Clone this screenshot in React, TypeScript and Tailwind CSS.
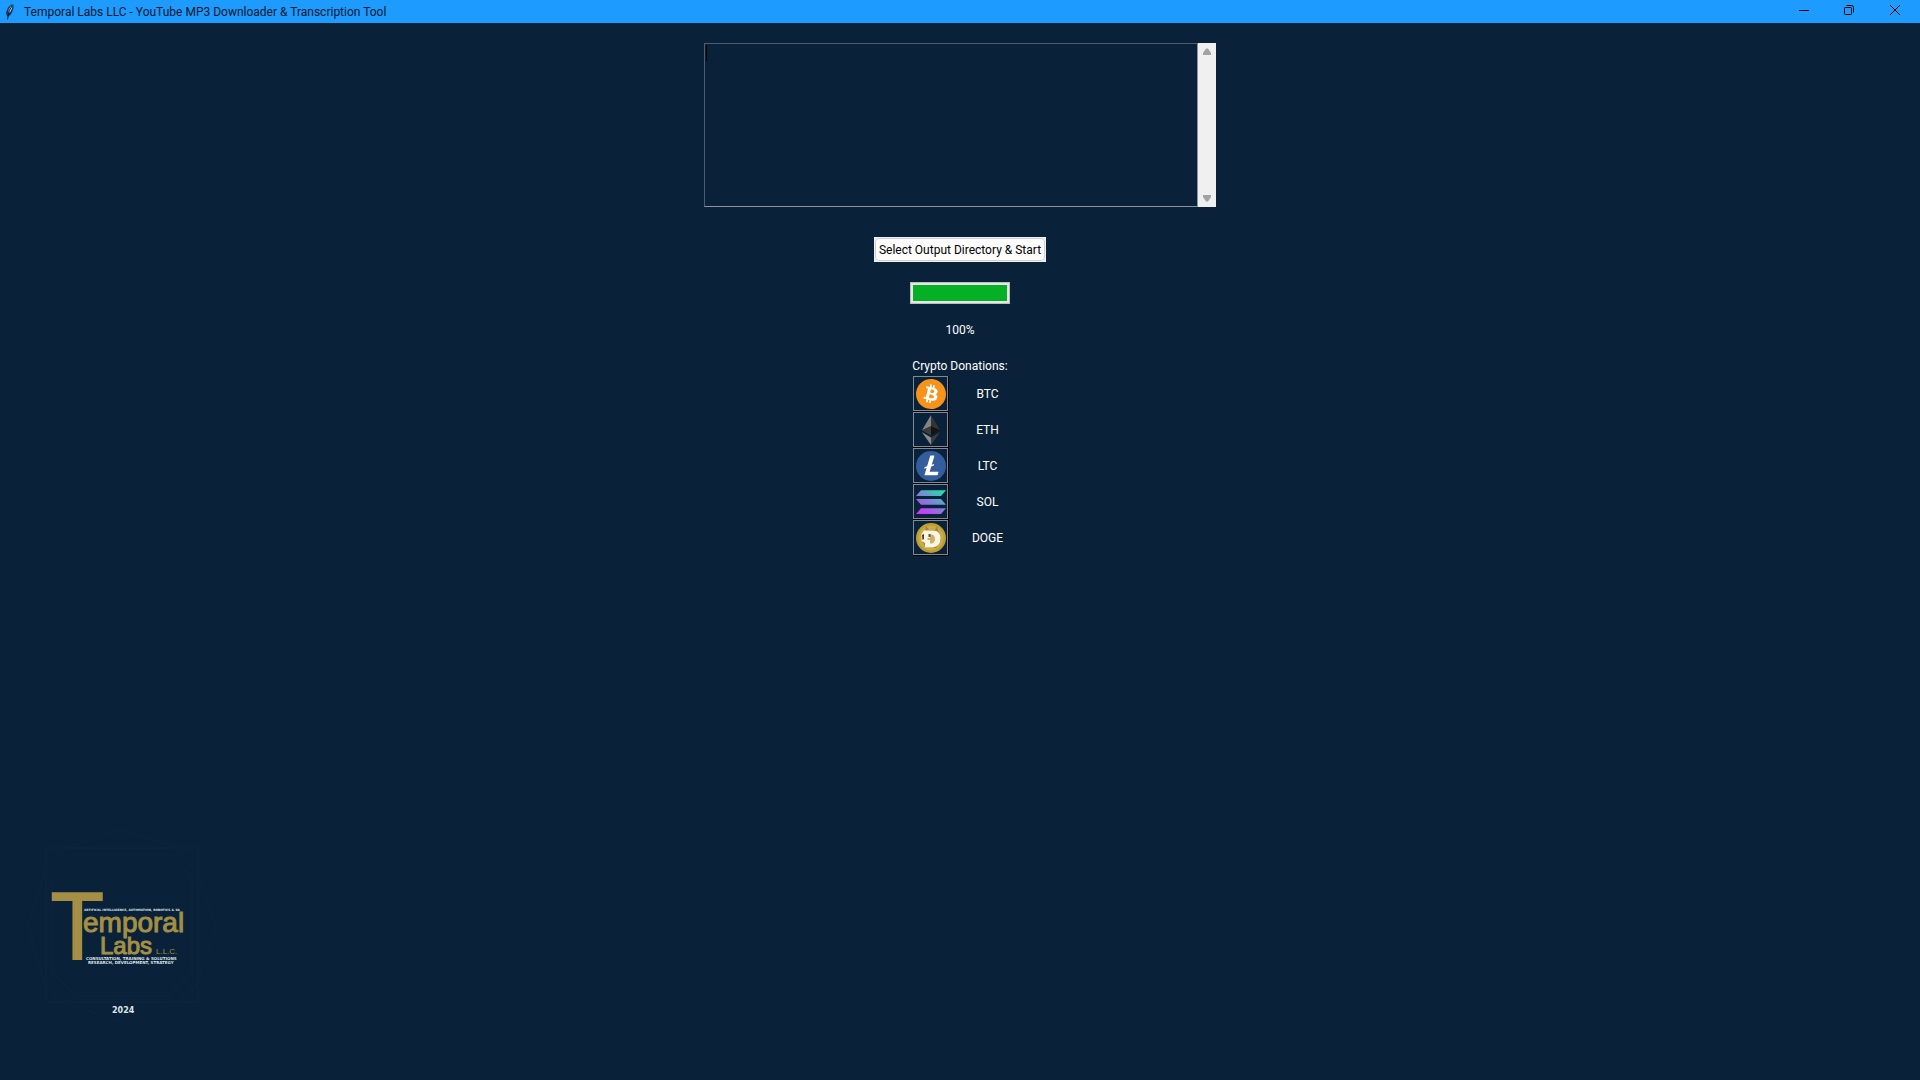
import type { ReactNode } from "react";
import { SiBitcoin, SiLitecoin } from "react-icons/si";

function Feather() {
  return (
    <svg viewBox="0 0 10 16" className="h-4 w-2.5 shrink-0" aria-hidden="true">
      <path d="M2 12.5 1 8.500 3 3.500 6 .8 8.500 .5 8.500 4 7 8.500 5 11.500 3 12.500Z" fill="#12375f" />
      <path d="M3 10 3.500 6 5.500 2.500 7.500 1.500 7 4.500 5.500 7.500Z" fill="#a9d0f5" />
      <path d="M7 2 4 7 2.500 15.500" fill="none" stroke="#08182b" strokeWidth="1" />
    </svg>
  );
}

function TitleBar() {
  return (
    <header className="flex h-[23px] items-center bg-[#1e9bff] pl-[5px] text-[#04182c]">
      <Feather />
      <h1 className="ml-[9px] text-[12px] leading-4">
        Temporal Labs LLC - YouTube MP3 Downloader &amp; Transcription Tool
      </h1>
      <div className="ml-auto flex items-center pr-0.5 pb-[3px]">
        <button aria-label="Minimize" className="flex h-5 w-11 items-center justify-center">
          <svg viewBox="0 0 10 10" className="size-2.5" shapeRendering="crispEdges">
            <path d="M0 5.500H10" stroke="#000" />
          </svg>
        </button>
        <button aria-label="Restore" className="flex h-5 w-[46px] items-center justify-center">
          <svg viewBox="0 0 10 10" className="size-2.5" fill="none" stroke="#000">
            <rect x="0.5" y="2.5" width="7" height="7" rx="0.8" />
            <path d="M2.500 .5H7.500A2 2 0 0 1 9.500 2.500V7.500" />
          </svg>
        </button>
        <button aria-label="Close" className="flex h-5 w-[46px] items-center justify-center">
          <svg viewBox="0 0 10 10" className="size-2.5" stroke="#000">
            <path d="M0 0 10 10M10 0 0 10" />
          </svg>
        </button>
      </div>
    </header>
  );
}

function UrlBox() {
  return (
    <div className="flex h-[164px] w-[512px]">
      <div className="relative flex-1">
        <textarea
          aria-label="YouTube URLs"
          className="block size-full resize-none border border-[#4c5e6e] border-r-[#8a949d] border-b-[#8a949d] bg-[#0a2239] p-0.5 font-['Liberation_Mono',monospace] text-[13px] text-white outline-none"
        />
        <span className="absolute top-0.5 left-0.5 h-4 w-px bg-black" />
      </div>
      <div className="flex w-[18px] flex-col items-center justify-between bg-[#f0f0f0] py-[5px]">
        <button aria-label="Scroll up" className="block">
          <svg viewBox="0 0 8 7" className="h-[7px] w-2" fill="#a3a3a3">
            <path d="M0 7V5L3 .5H5L8 5V7Z" />
          </svg>
        </button>
        <button aria-label="Scroll down" className="block">
          <svg viewBox="0 0 8 7" className="h-[7px] w-2" fill="#a3a3a3">
            <path d="M0 0V2L3 6.500H5L8 2V0Z" />
          </svg>
        </button>
      </div>
    </div>
  );
}

function Btc() {
  return (
    <svg viewBox="0 0 30 30" className="size-[30px]">
      <circle cx="15" cy="15" r="13" fill="#fff" />
      <SiBitcoin size={30} color="#f7931a" />
    </svg>
  );
}

function Eth() {
  return (
    <svg viewBox="0 0 30 30" className="size-[30px]">
      <path d="M15 0 6 15.300 15 11.200Z" fill="#828384" />
      <path d="M15 0 24 15.300 15 11.200Z" fill="#343434" />
      <path d="M6 15.300 15 11.200V20.600Z" fill="#3c3c3b" />
      <path d="M24 15.300 15 11.200V20.600Z" fill="#141414" />
      <path d="M6 17.200 15 22.500V30Z" fill="#8c8c8c" />
      <path d="M24 17.200 15 22.500V30Z" fill="#3c3c3b" />
    </svg>
  );
}

function Ltc() {
  return (
    <svg viewBox="0 0 30 30" className="size-[30px]">
      <circle cx="15" cy="15" r="14" fill="#fff" />
      <SiLitecoin size={30} color="#345d9d" />
    </svg>
  );
}

function Sol() {
  return (
    <svg viewBox="0 0 30 30" className="size-[30px]">
      <defs>
        <linearGradient id="sol" gradientUnits="userSpaceOnUse" x1="27" y1="1" x2="9" y2="31">
          <stop offset="0" stopColor="#14f1a5" />
          <stop offset="0.5" stopColor="#7a86d6" />
          <stop offset="1" stopColor="#d92bff" />
        </linearGradient>
      </defs>
      <g fill="url(#sol)">
        <path d="M0 9 5 3.300H30L25 9Z" />
        <path d="M0 12H25L30 17.800H5Z" />
        <path d="M0 27 5 21.200H30L25 27Z" />
      </g>
    </svg>
  );
}

function Doge() {
  return (
    <svg viewBox="0 0 30 30" className="size-[30px]">
      <circle cx="15" cy="15" r="15" fill="#ba9f33" />
      <circle cx="15" cy="15" r="12.5" fill="#c9ab48" />
      <path d="M9 9 10 3 13 7 19 7 21 3 23 10 25 17 20 25H10L6 18Z" fill="#ad8233" />
      <path d="M8 7.500H17C22 7.500 24.500 11 24.500 15.500 24.500 21 21 24.500 16 24.500H9V20L5.500 18V11Z" fill="#fbf6e4" />
      <path d="M6 12 8 11V16L6.500 17Z" fill="#4d3b1c" />
      <path d="M14 11.500H16C20 12 20 20 16 20.500H14V17H11.500V15H14Z" fill="#cdb16a" />
      <path d="M12.500 11H14.500V14H12.500Z" fill="#6b5428" />
    </svg>
  );
}

const coins: { name: string; icon: ReactNode }[] = [
  { name: "BTC", icon: <Btc /> },
  { name: "ETH", icon: <Eth /> },
  { name: "LTC", icon: <Ltc /> },
  { name: "SOL", icon: <Sol /> },
  { name: "DOGE", icon: <Doge /> },
];

function Donations() {
  return (
    <section className="mt-5 w-32">
      <h2 className="text-center text-[12px] leading-4 whitespace-nowrap">Crypto Donations:</h2>
      <ul className="mt-0.5">
        {coins.map((coin) => (
          <li key={coin.name} className="flex items-center pl-[17px]">
            <button
              aria-labelledby={`coin-${coin.name}`}
              className="size-9 border-r border-b border-black"
            >
              <span className="block size-[35px] border border-[#7d8a96] p-0.5">{coin.icon}</span>
            </button>
            <span id={`coin-${coin.name}`} className="flex-1 pl-0.5 text-center text-[12px] leading-4">
              {coin.name}
            </span>
          </li>
        ))}
      </ul>
    </section>
  );
}

function Logo() {
  return (
    <svg viewBox="0 0 210 220" className="h-[220px] w-[210px]" role="img" aria-label="Temporal Labs LLC">
      <g fill="none" stroke="#0b243b" strokeWidth="2">
        <path d="M102 9 157 28 175 52 196 105 176 165 157 183 102 202 45 183 25 165 8 105 25 52 45 28Z" />
        <rect x="26" y="28" width="152" height="154" />
        <path d="M56 34H148L172 58V152L148 176H56L32 152V58Z" />
      </g>
      <g fill="#a58f45" stroke="#a58f45" fontFamily="'Liberation Sans', sans-serif">
        <text x="32" y="139" fontSize="92" strokeWidth="2" fontFamily="'Open Sans', sans-serif">T</text>
        <text x="63" y="112" fontSize="28" strokeWidth="1">emporal</text>
        <text x="80" y="134" fontSize="24" strokeWidth="1">Labs</text>
        <text x="136" y="134" fontSize="8" stroke="none">L.L.C.</text>
      </g>
      <g fill="#dfe4ea" fontFamily="'DejaVu Sans', sans-serif" fontWeight="bold">
        <text x="64" y="91" fontSize="3">ARTIFICAL INTELLIGENCE, AUTOMATION, ROBOTICS &amp; 3D</text>
        <text x="66" y="140" fontSize="4">CONSULTATION, TRAINING &amp; SOLUTIONS</text>
        <text x="68" y="144" fontSize="4">RESEARCH, DEVELOPMENT, STRATEGY</text>
        <text x="92" y="193" fontSize="8">2024</text>
      </g>
    </svg>
  );
}

export default function App() {
  return (
    <div className="flex min-h-screen flex-col bg-[#0a2239] font-['Roboto',sans-serif] text-white">
      <TitleBar />
      <main className="flex flex-1 flex-col items-center pt-5">
        <UrlBox />
        <button className="mt-[30px] h-[25px] bg-[#f0f0f0] p-px text-[12px] leading-4 text-black">
          <span className="flex h-full items-center rounded-[4px] border border-[#d0d0d0] bg-[#fdfdfd] px-[3px] whitespace-nowrap">
            Select Output Directory &amp; Start
          </span>
        </button>
        <progress
          aria-label="Download progress"
          max={100}
          value={100}
          className="mt-5 block h-[22px] w-[100px] appearance-none border border-[#bcbcbc] bg-[#e6e6e6] p-0.5 [&::-webkit-progress-bar]:bg-[#e6e6e6] [&::-webkit-progress-value]:bg-[#06b025]"
        />
        <p className="mt-[18px] text-[12px] leading-4">100%</p>
        <Donations />
      </main>
      <footer className="pb-10 pl-5">
        <Logo />
      </footer>
    </div>
  );
}
